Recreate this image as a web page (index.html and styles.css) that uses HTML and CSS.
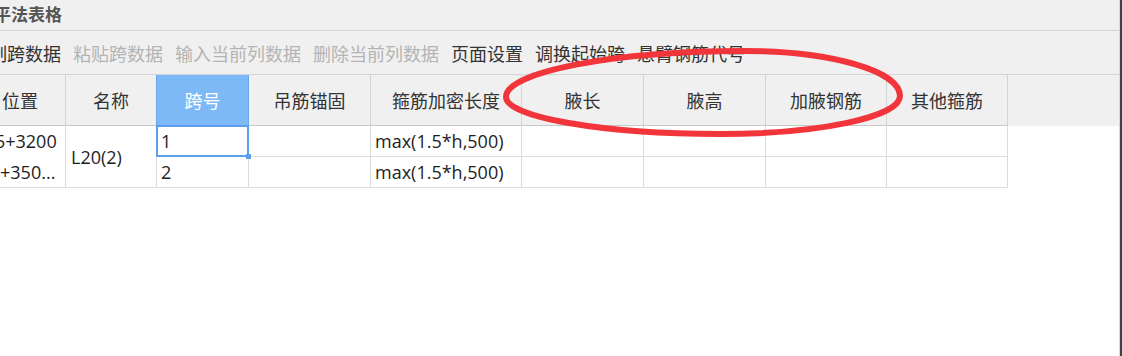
FILE: index.html
```html
<!DOCTYPE html>
<html lang="zh-CN">
<head>
    <meta charset="UTF-8">
    <title>平法表格</title>
    <link rel="stylesheet" href="styles.css">
</head>
<body>
    <div class="window">
        <div class="frame">
            <div class="title">平法表格</div>
            <div class="toolbar">
                <span class="tool">复制跨数据</span>
                <span class="tool off">粘贴跨数据</span>
                <span class="tool off">输入当前列数据</span>
                <span class="tool off">删除当前列数据</span>
                <span class="tool">页面设置</span>
                <span class="tool">调换起始跨</span>
                <span class="tool">悬臂钢筋代号</span>
            </div>
            <div class="head-band">
                <div class="grid">
                    <div class="hcell">位置</div>
                    <div class="hcell">名称</div>
                    <div class="hcell picked">跨号</div>
                    <div class="hcell">吊筋锚固</div>
                    <div class="hcell">箍筋加密长度</div>
                    <div class="hcell">腋长</div>
                    <div class="hcell">腋高</div>
                    <div class="hcell">加腋钢筋</div>
                    <div class="hcell">其他箍筋</div>
                </div>
            </div>
            <div class="rows grid">
                <div class="cell span2 pos">
                    <div class="line">2,5+3200</div>
                    <div class="line more">+350...</div>
                </div>
                <div class="cell span2">L20(2)</div>
                <div class="cell current">1</div>
                <div class="cell"></div>
                <div class="cell">max(1.5*h,500)</div>
                <div class="cell"></div>
                <div class="cell"></div>
                <div class="cell"></div>
                <div class="cell"></div>
                <div class="cell">2</div>
                <div class="cell"></div>
                <div class="cell">max(1.5*h,500)</div>
                <div class="cell"></div>
                <div class="cell"></div>
                <div class="cell"></div>
                <div class="cell"></div>
            </div>
        </div>
        <!-- red hand-drawn circle around the haunch columns -->
        <svg class="mark" width="1122" height="356" viewBox="0 0 1122 356">
            <path d="M506 97 C506 72 613 51 745 51 C831 51 900 71 900 96 C900 117 819 134 720 134 C602 134 506 117 506 97 Z"
                  fill="none" stroke="#f2353a" stroke-width="6"/>
        </svg>
    </div>
</body>
</html>
```

FILE: styles.css
```css
html, body {
    margin: 0;
    padding: 0;
    background: #ffffff;
}

body {
    font-family: "Open Sans", "Noto Sans CJK SC", sans-serif;
    font-size: 18px;
    color: #222;
}

.window {
    position: relative;
    width: 1120px;
    height: 356px;
    border-right: 2px solid #3c4146;
    overflow: hidden;
    background: #ffffff;
}

.frame {
    margin-left: -30px;
    border-right: 1px solid #d8d8d8;
    height: 356px;
}

.title {
    height: 30px;
    line-height: 30px;
    padding-left: 24px;
    background: #f0f0f0;
    border-bottom: 1px solid #d2d4d6;
    font-weight: bold;
    font-size: 17px;
    color: #555;
}

.toolbar {
    display: flex;
    gap: 12px;
    height: 43px;
    align-items: center;
    padding-left: 1px;
    background: #f0f0f0;
    border-bottom: 1px solid #d2d4d6;
    white-space: nowrap;
}

.tool {
    color: #333;
}

.tool.off {
    color: #b4b4b4;
}

.head-band {
    background: #f0f0f0;
    padding-left: 5px;
}

.grid {
    display: grid;
    grid-template-columns: 91px 91px 92px 122px 151px 122px 122px 121px 121px;
}

.hcell {
    box-sizing: border-box;
    height: 51px;
    display: flex;
    align-items: center;
    justify-content: center;
    border-right: 1px solid #d4d4d4;
    border-bottom: 1px solid #c8c8c8;
    color: #333;
}

.hcell.picked {
    background: #7db9f6;
    color: #fff;
    border-right-color: #68a8f0;
    box-shadow: -1px 0 0 #68a8f0;
}

.rows {
    margin-left: 5px;
    width: 1033px;
}

.cell {
    position: relative;
    box-sizing: border-box;
    height: 31px;
    padding-left: 4px;
    display: flex;
    align-items: center;
    border-right: 1px solid #dcdcdc;
    border-bottom: 1px solid #dcdcdc;
    background: #fff;
    white-space: nowrap;
    color: #1e1e24;
}

.cell.span2 {
    grid-row: span 2;
    height: 62px;
    padding-left: 5px;
}

.cell.pos {
    flex-direction: column;
    align-items: flex-start;
    justify-content: center;
    line-height: 31px;
}

.cell.pos .more {
    padding-left: 20px;
}

.cell.current::after {
    content: "";
    position: absolute;
    left: -1px;
    top: -1px;
    right: -1px;
    bottom: -1px;
    border: 2px solid #5e9fec;
}

.cell.current::before {
    content: "";
    position: absolute;
    right: -3px;
    bottom: -3px;
    width: 5px;
    height: 5px;
    background: #5e9fec;
    z-index: 1;
}

.mark {
    position: absolute;
    left: 0;
    top: 0;
    pointer-events: none;
}
```
